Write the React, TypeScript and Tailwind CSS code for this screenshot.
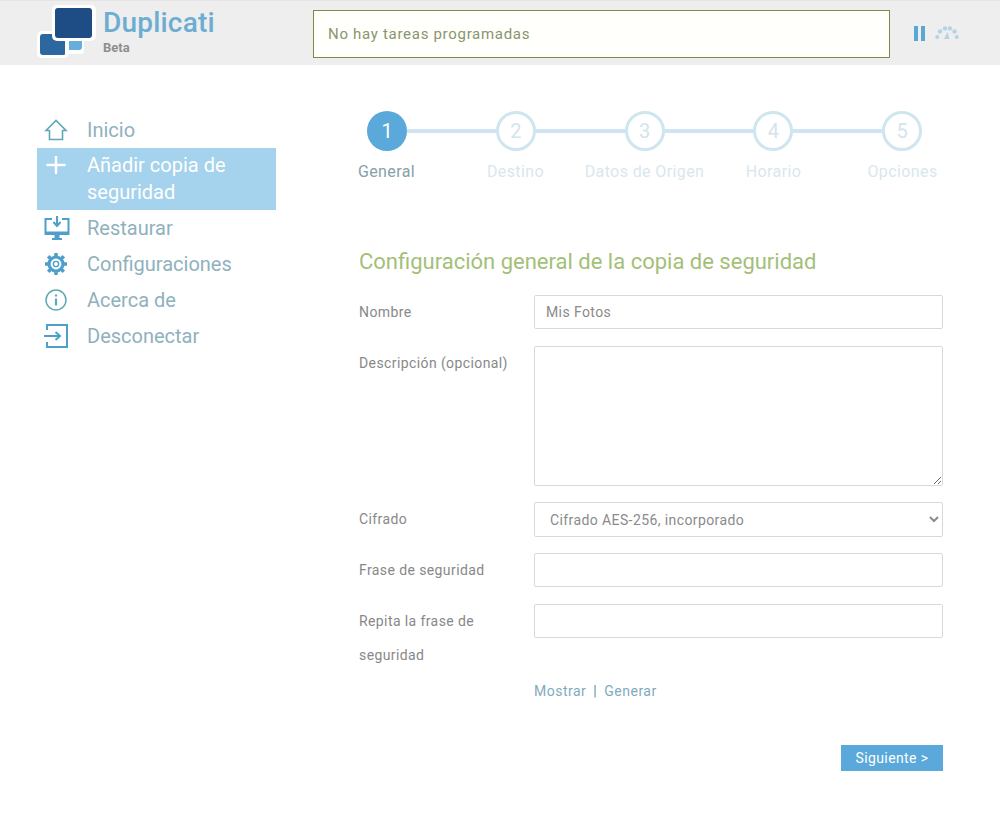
import React from "react";

const font = "font-['Roboto',_'Liberation_Sans',_sans-serif]";

const Logo = () => (
    <svg width="60" height="54" viewBox="0 0 60 54">
        <rect x="0" y="26" width="32" height="27" rx="5" fill="#fff" />
        <rect x="3" y="29" width="26" height="21" rx="3" fill="#2c679f" />
        <path d="M28 35h19v10a4 4 0 0 1-4 4H28z" fill="#fff" />
        <path d="M32 36h13v6a3 3 0 0 1-3 3H32z" fill="#66aede" />
        <rect x="15" y="0" width="44" height="36" rx="5" fill="#fff" />
        <rect x="18" y="3" width="37" height="30" rx="3" fill="#1e4d86" />
    </svg>
);

const HomeIcon = () => (
    <svg width="24" height="24" viewBox="0 0 24 24" fill="none" stroke="#5fa8b4" strokeWidth="1.6">
        <path d="M2 12.500 12 2.500l10 10h-3.500v9h-13v-9z" />
    </svg>
);
const PlusIcon = () => (
    <svg width="24" height="24" viewBox="0 0 24 24" fill="none" stroke="#fff" strokeWidth="2.4">
        <path d="M12 3v18M2.500 12h19" />
    </svg>
);
const RestoreIcon = () => (
    <svg width="26" height="24" viewBox="0 0 26 24" fill="none" stroke="#4f9fca" strokeWidth="2">
        <path d="M8 3H1.500v15h23V3H18" />
        <path d="M13 0v9" />
        <path d="m9.500 6 3.500 4 3.500-4" />
        <path d="M1.500 17h23" strokeWidth="3" />
        <path d="M13 18v4" strokeWidth="5" />
        <path d="M8 23h10" />
    </svg>
);
const GearIcon = () => (
    <svg width="24" height="24" viewBox="0 0 24 24" fill="none" stroke="#4f9fca">
        <circle cx="12" cy="12" r="7" strokeWidth="3.200" />
        <circle cx="12" cy="12" r="2.600" strokeWidth="1.400" />
        <path
            d="M12 1v4M12 19v4M1 12h4M19 12h4M4.200 4.200 7 7M17 17l2.800 2.800M19.800 4.200 17 7M7 17l-2.800 2.800"
            strokeWidth="3.600"
        />
    </svg>
);
const InfoIcon = () => (
    <svg width="24" height="24" viewBox="0 0 24 24" fill="none" stroke="#5fa8b4" strokeWidth="1.500">
        <circle cx="12" cy="12" r="10" />
        <path d="M12 10.500v7" strokeWidth="2.200" />
        <path d="M12 6.500v2" strokeWidth="2.200" />
    </svg>
);
const LogoutIcon = () => (
    <svg width="26" height="26" viewBox="0 0 26 26" fill="none" stroke="#4f9fca" strokeWidth="2">
        <path d="M3 7V2h20v22H3v-5" />
        <path d="M0 13h15" />
        <path d="m11.500 9 4.500 4-4.500 4" />
    </svg>
);

const GaugeIcon = () => (
    <svg width="24" height="14" viewBox="0 0 24 14" fill="#b4d3e4">
        <circle cx="2.200" cy="11" r="2" />
        <circle cx="5" cy="5.500" r="2.200" />
        <circle cx="10" cy="2.400" r="2.200" />
        <circle cx="15" cy="2.400" r="2.200" />
        <circle cx="19.500" cy="5.500" r="2.200" />
        <circle cx="21.800" cy="11" r="2" />
        <path d="m9 13 3.500-7 2 7z" />
    </svg>
);

const navItems = [
    { label: "Inicio", icon: <HomeIcon /> },
    { label: "Añadir copia de seguridad", icon: <PlusIcon />, active: true },
    { label: "Restaurar", icon: <RestoreIcon /> },
    { label: "Configuraciones", icon: <GearIcon /> },
    { label: "Acerca de", icon: <InfoIcon /> },
    { label: "Desconectar", icon: <LogoutIcon /> },
];

const steps = ["General", "Destino", "Datos de Origen", "Horario", "Opciones"];

const inputClass = "block w-[410px] border border-[#d9d9d9] rounded-[2px] bg-white px-[11px] text-[14px] text-[#8a8a8a] tracking-[0.4px] outline-none";
const labelClass = "w-[175px] shrink-0 text-[14px] leading-[34px] text-[#888] tracking-[0.4px]";

const App = () => {
    return (
        <div className={`${font} w-[1000px] h-[822px] bg-white overflow-hidden`}>
            <header className="h-[65px] bg-[#eeeeee] border-t border-[#e4e4e4] flex items-center">
                <div className="ml-[37px] w-[64px] shrink-0 -mt-[3px]">
                    <Logo />
                </div>
                <div className="ml-[2px] w-[210px] shrink-0 -mt-[2px]">
                    <div className="text-[28px] leading-[30px] font-medium text-[#6cadd1] tracking-[0.2px]">Duplicati</div>
                    <div className="text-[13px] leading-[18px] font-bold text-[#8f8f8f] mt-[1px]">Beta</div>
                </div>
                <div className="w-[577px] h-[48px] shrink-0 mt-[2px] border border-[#7b8a45] bg-[#fffffb] flex items-center pl-[14px] text-[15px] text-[#8a9570] tracking-[0.7px]">
                    No hay tareas programadas
                </div>
                <div className="ml-[24px] flex items-center gap-[10px]">
                    <div className="flex gap-[3px]">
                        <span className="w-[4px] h-[15px] bg-[#5ba7d4]" />
                        <span className="w-[4px] h-[15px] bg-[#5ba7d4]" />
                    </div>
                    <GaugeIcon />
                </div>
            </header>

            <div className="flex">
                <nav className="ml-[37px] mt-[47px] w-[239px] shrink-0">
                    {navItems.map((item) => (
                        <div
                            key={item.label}
                            className={`flex pl-[7px] pr-[20px] text-[20px] ${
                                item.active ? "bg-[#a5d2ec] text-white leading-[27px] py-[4px]" : "text-[#8fb1bd] leading-[36px]"
                            }`}
                        >
                            <span className={`w-[43px] shrink-0 flex justify-start ${item.active ? "pt-[1px]" : "items-center"}`}>
                                {item.icon}
                            </span>
                            <span>{item.label}</span>
                        </div>
                    ))}
                </nav>

                <main className="ml-[83px] w-[584px] shrink-0">
                    <div className="mt-[46px] ml-[8px] flex items-center w-[555px]">
                        {steps.map((s, i) => (
                            <React.Fragment key={s}>
                                {i > 0 && <span className="flex-1 h-[4px] bg-[#cfe5f2]" />}
                                <span
                                    className={`w-[40px] h-[40px] rounded-full flex items-center justify-center text-[20px] shrink-0 ${
                                        i === 0 ? "bg-[#5aa9da] text-white" : "border-[3px] border-[#cfe5ef] text-[#d4e4ec]"
                                    }`}
                                >
                                    {i + 1}
                                </span>
                            </React.Fragment>
                        ))}
                    </div>
                    <div className="-ml-[37px] mt-[11px] w-[645px] grid grid-cols-[129px_129px_129px_129px_129px] text-center text-[16px] leading-[20px] tracking-[0.4px]">
                        {steps.map((s, i) => (
                            <span key={s} className={i === 0 ? "text-[#85a1aa]" : "text-[#d9e7ed]"}>
                                {s}
                            </span>
                        ))}
                    </div>

                    <h2 className="mt-[65px] text-[22px] leading-[30px] font-normal text-[#a3bf78] tracking-[0px]">
                        Configuración general de la copia de seguridad
                    </h2>

                    <div className="mt-[18px] flex">
                        <label className={labelClass}>Nombre</label>
                        <input className={`${inputClass} h-[34px]`} defaultValue="Mis Fotos" />
                    </div>
                    <div className="mt-[17px] flex">
                        <label className={labelClass}>Descripción (opcional)</label>
                        <textarea className={`${inputClass} h-[140px]`} />
                    </div>
                    <div className="mt-[16px] flex">
                        <label className={labelClass}>Cifrado</label>
                        <select className={`${inputClass} h-[35px]`} defaultValue="aes">
                            <option value="aes">Cifrado AES-256, incorporado</option>
                        </select>
                    </div>
                    <div className="mt-[16px] flex">
                        <label className={labelClass}>Frase de seguridad</label>
                        <input className={`${inputClass} h-[34px]`} />
                    </div>
                    <div className="mt-[17px] flex">
                        <label className={labelClass}>
                            Repita la frase de
                            <br />
                            seguridad
                        </label>
                        <input className={`${inputClass} h-[34px]`} />
                    </div>

                    <div className="mt-[9px] ml-[175px] text-[14px] leading-[20px] tracking-[0.5px] text-[#7fabbd]">
                        <span>Mostrar</span>
                        <span className="mx-[7px] text-[#5f8ea5]">|</span>
                        <span>Generar</span>
                    </div>

                    <div className="mt-[44px] flex justify-end">
                        <button className="w-[102px] h-[26px] bg-[#5aa9da] text-white text-[14px] tracking-[0.4px]">Siguiente &gt;</button>
                    </div>
                </main>
            </div>
        </div>
    );
};

export default App;
